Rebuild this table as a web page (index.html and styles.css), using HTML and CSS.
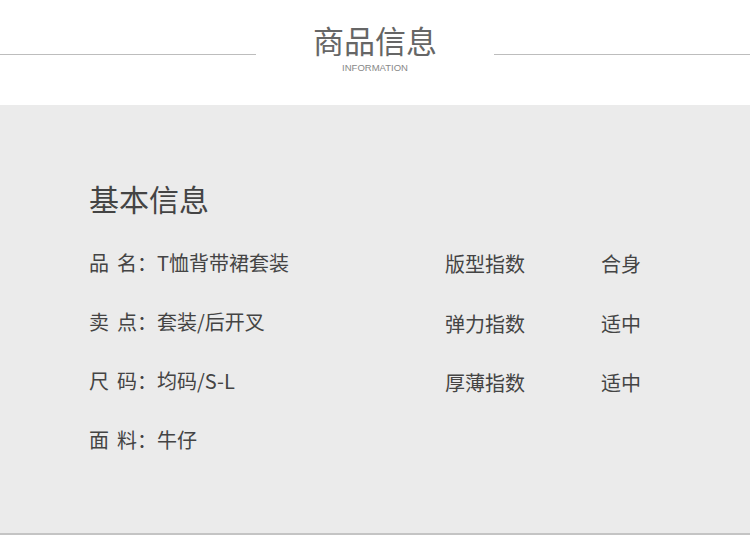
FILE: index.html
```html
<!DOCTYPE html>
<html lang="zh">
<head>
<meta charset="utf-8">
<link rel="stylesheet" href="styles.css">
</head>
<body>
<header class="head">
  <div class="line"></div>
  <div class="titles">
    <div class="title">商品信息</div>
    <div class="sub">INFORMATION</div>
  </div>
  <div class="line"></div>
</header>
<section class="panel">
  <h2 class="h">基本信息</h2>
  <div class="cols">
    <div class="left">
      <div class="row"><span class="lk"><span>品</span><span class="k2">名：</span></span>T恤背带裙套装</div>
      <div class="row"><span class="lk"><span>卖</span><span class="k2">点：</span></span>套装/后开叉</div>
      <div class="row"><span class="lk"><span>尺</span><span class="k2">码：</span></span>均码/S-L</div>
      <div class="row"><span class="lk"><span>面</span><span class="k2">料：</span></span>牛仔</div>
    </div>
    <div class="right">
      <div class="rrow"><span class="k">版型指数</span><span class="v">合身</span></div>
      <div class="rrow"><span class="k">弹力指数</span><span class="v">适中</span></div>
      <div class="rrow"><span class="k">厚薄指数</span><span class="v">适中</span></div>
    </div>
  </div>
</section>
</body>
</html>
```
FILE: styles.css
```css
* { box-sizing: border-box; margin: 0; padding: 0; }
body {
  width: 750px;
  height: 552px;
  background: #fff;
  font-family: "Noto Sans CJK SC", "Noto Sans", sans-serif;
  overflow: hidden;
}
.head {
  height: 105px;
  display: flex;
  align-items: flex-start;
}
.line {
  flex: 1;
  height: 1px;
  background: #bdbdbd;
  margin-top: 54px;
}
.titles {
  width: 238px;
  display: flex;
  flex-direction: column;
  align-items: center;
  padding-top: 20px;
}
.title {
  font-size: 31px;
  line-height: 40px;
  color: #666;
}
.sub {
  font-family: "Liberation Sans", sans-serif;
  font-size: 9.5px;
  line-height: 12px;
  color: #888;
  margin-top: 2px;
}
.panel {
  height: 430px;
  background: #ebebeb;
  border-bottom: 2px solid #c4c4c4;
  padding: 73px 0 0 89px;
}
.h {
  font-weight: normal;
  font-size: 30px;
  line-height: 40px;
  color: #444;
}
.cols {
  display: flex;
  margin-top: 31px;
}
.left { width: 356px; }
.row, .rrow {
  font-size: 20px;
  line-height: 28px;
  color: #444;
  height: 59px;
  display: flex;
}
.right { padding-top: 1px; }
.rrow { height: 59.5px; }
.lk { width: 68px; display: flex; }
.k2 { margin-left: 8px; }
.k { width: 156px; }
.v { color: #444; }
```
